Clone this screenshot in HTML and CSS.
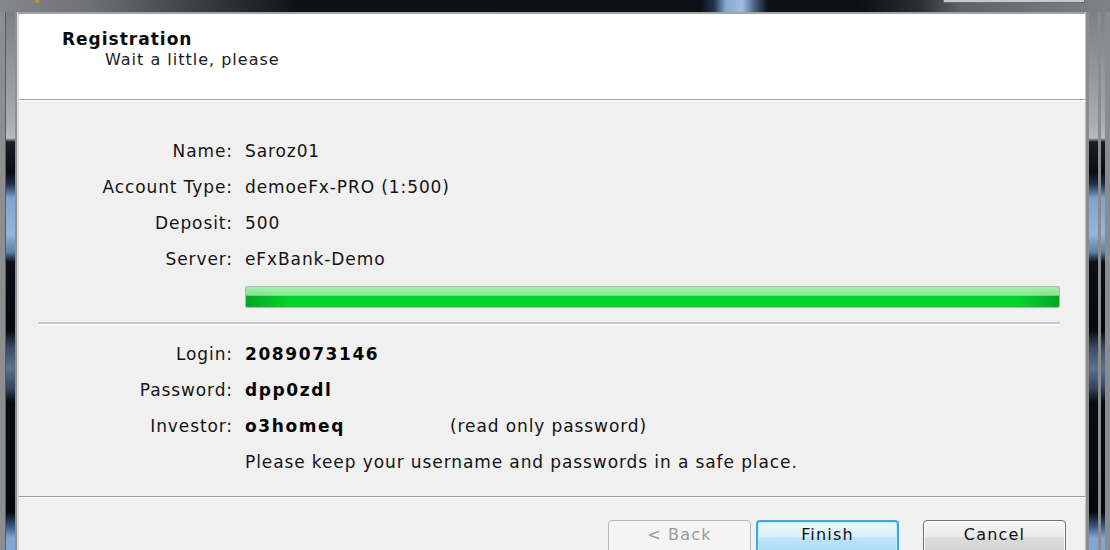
FILE: index.html
```html
<!DOCTYPE html>
<html lang="en">
<head>
<meta charset="utf-8">
<title>Registration</title>
<link rel="stylesheet" href="styles.css">
</head>
<body>
<div class="desktop">
  <div class="top-frame">
    <span class="app-icon"></span>
    <span class="caption-btn"></span>
  </div>
  <div class="window-row">
    <div class="side-frame left"></div>
    <div class="dialog">
      <header class="dlg-header">
        <div class="title">Registration</div>
        <div class="subtitle">Wait a little, please</div>
      </header>
      <main class="dlg-body">
        <dl class="fields">
          <dt>Name:</dt><dd>Saroz01</dd>
          <dt>Account Type:</dt><dd>demoeFx-PRO (1:500)</dd>
          <dt>Deposit:</dt><dd>500</dd>
          <dt>Server:</dt><dd>eFxBank-Demo</dd>
        </dl>
        <div class="progress"><div class="progress-fill" style="width:100%"></div></div>
        <div class="sep"></div>
        <dl class="fields creds">
          <dt>Login:</dt><dd><b>2089073146</b></dd>
          <dt>Password:</dt><dd><b>dpp0zdl</b></dd>
          <dt>Investor:</dt><dd class="inv"><b class="inv-val">o3homeq</b><span>(read only password)</span></dd>
          <dt></dt><dd>Please keep your username and passwords in a safe place.</dd>
        </dl>
      </main>
      <footer class="dlg-footer">
        <button class="btn" disabled>&lt; Back</button>
        <button class="btn default">Finish</button>
        <button class="btn cancel">Cancel</button>
      </footer>
    </div>
    <div class="side-frame right"></div>
  </div>
</div>
</body>
</html>
```
FILE: styles.css
```css
* { box-sizing: border-box; margin: 0; padding: 0; }

:root {
  --frame-grad: linear-gradient(to bottom,
    #7d8084 0, #a9abad 110px, #b9bbbd 126px, #1b1f25 130px, #0a0d12 160px,
    #1d2e44 172px, #7fa3cc 186px, #93b6de 222px, #5d7fa6 240px, #0b0f16 250px,
    #06080c 318px, #3b4d64 336px, #5a7190 356px, #33465e 376px, #080b10 390px,
    #06080c 500px, #2b4a6e 512px, #7fa6d4 526px);
}

body {
  width: 1110px;
  height: 550px;
  overflow: hidden;
  background: #0b0f16;
  font-family: "DejaVu Sans", sans-serif;
  color: #141414;
}

.desktop {
  display: flex;
  flex-direction: column;
  height: 550px;
}

.top-frame {
  height: 12px;
  flex: none;
  display: flex;
  align-items: flex-start;
  padding: 0 25px 0 35px;
  background: linear-gradient(to right,
    #858789 0, #6e7174 90px, #3a3e44 200px, #0e1218 300px, #0b0f16 700px,
    #22344a 714px, #86a9cf 726px, #9dbce0 742px, #41597a 756px, #0b0f16 768px,
    #0b0f16 860px, #2c3036 920px, #5e6166 960px, #808386 1110px);
}

.app-icon {
  width: 4px;
  height: 3px;
  background: #c98a2c;
}

.caption-btn {
  margin-left: auto;
  width: 142px;
  height: 3px;
  background: #c7c9cc;
  border: 1px solid #6a6d71;
  border-top: 0;
}

.window-row {
  flex: 1;
  display: flex;
  min-height: 0;
}

.side-frame.left {
  width: 17px;
  flex: none;
  border-left: 5px solid #8c8e90;
  border-right: 2px solid #8e8f90;
  background: var(--frame-grad);
  box-shadow: inset 1px 0 0 #5a5c5e;
}

.side-frame.right {
  width: 25px;
  flex: none;
  border-left: 1px solid #c2c2c2;
  background:
    var(--frame-grad) 3px 0 / 9px 100% no-repeat,
    var(--frame-grad) 15px 0 / 4px 100% no-repeat,
    #8a8c8e;
}

.dialog {
  flex: 1;
  display: flex;
  flex-direction: column;
  background: #f0f0f0;
  border-top: 2px solid #a4a4a4;
  border-left: 2px solid #dadada;
}

.dlg-header {
  height: 86px;
  flex: none;
  background: #fff;
  border-bottom: 1px solid #a0a0a0;
  padding: 15px 0 0 43px;
}

.title {
  font-size: 17px;
  font-weight: bold;
  line-height: 20px;
  letter-spacing: 1px;
  color: #0a0a0a;
}

.subtitle {
  font-size: 16px;
  line-height: 21px;
  letter-spacing: 1px;
  padding-left: 43px;
  color: #1a1a28;
}

.dlg-body {
  border-top: 1px solid #fcfcfc;
  padding: 32px 0 16px;
}

.fields {
  display: grid;
  grid-template-columns: 214px 1fr;
  column-gap: 12px;
  font-size: 17px;
  line-height: 36px;
  letter-spacing: 0.9px;
}

.fields dt {
  text-align: right;
  min-height: 36px;
}

.fields b {
  font-weight: bold;
  letter-spacing: 1.6px;
  color: #050505;
}

.inv {
  display: flex;
}

.inv-val {
  width: 205px;
}

.progress {
  height: 22px;
  margin: 9px 25px 0 226px;
  border: 1px solid #b2b2b2;
  border-radius: 2px;
  background: #e6e6e6;
  overflow: hidden;
}

.progress-fill {
  height: 100%;
  background:
    linear-gradient(to bottom, rgba(205, 255, 205, 0.8) 0, rgba(175, 245, 175, 0.75) 42%, rgba(255, 255, 255, 0) 44%),
    linear-gradient(to right, #03a527 0, #00d32a 40px, #00d42a calc(100% - 40px), #03a527 100%);
}

.sep {
  height: 4px;
  margin: 14px 25px 0 19px;
  border-top: 2px solid #c9c9c9;
  border-bottom: 2px solid #fbfbfb;
}

.creds {
  margin-top: 10px;
}

.dlg-footer {
  flex: 1;
  display: flex;
  justify-content: flex-end;
  align-items: flex-start;
  border-top: 1px solid #a0a0a0;
  box-shadow: inset 0 1px 0 #fdfdfd;
  padding: 23px 19px 0 0;
}

.btn {
  width: 143px;
  height: 34px;
  padding-bottom: 5px;
  font-family: "DejaVu Sans", sans-serif;
  font-size: 16px;
  letter-spacing: 1.2px;
  color: #111;
  border: 1px solid #707070;
  border-radius: 4px;
  background: linear-gradient(to bottom, #f4f4f4 0, #ebebeb 48%, #dddddd 52%, #cfcfcf 100%);
  box-shadow: inset 0 0 0 1px #fbfbfb;
}

.btn:disabled {
  color: #9a9a9a;
  border-color: #b5b8bb;
  background: #f4f4f4;
  box-shadow: none;
}

.btn.default {
  margin-left: 5px;
  border: 2px solid #3ca6e6;
  background: linear-gradient(to bottom, #eaf6fd 0, #d9f0fc 48%, #bee6fd 52%, #a7d9f5 100%);
  box-shadow: inset 0 0 0 1px #c6ebfb;
}

.btn.cancel {
  margin-left: 24px;
}
```
